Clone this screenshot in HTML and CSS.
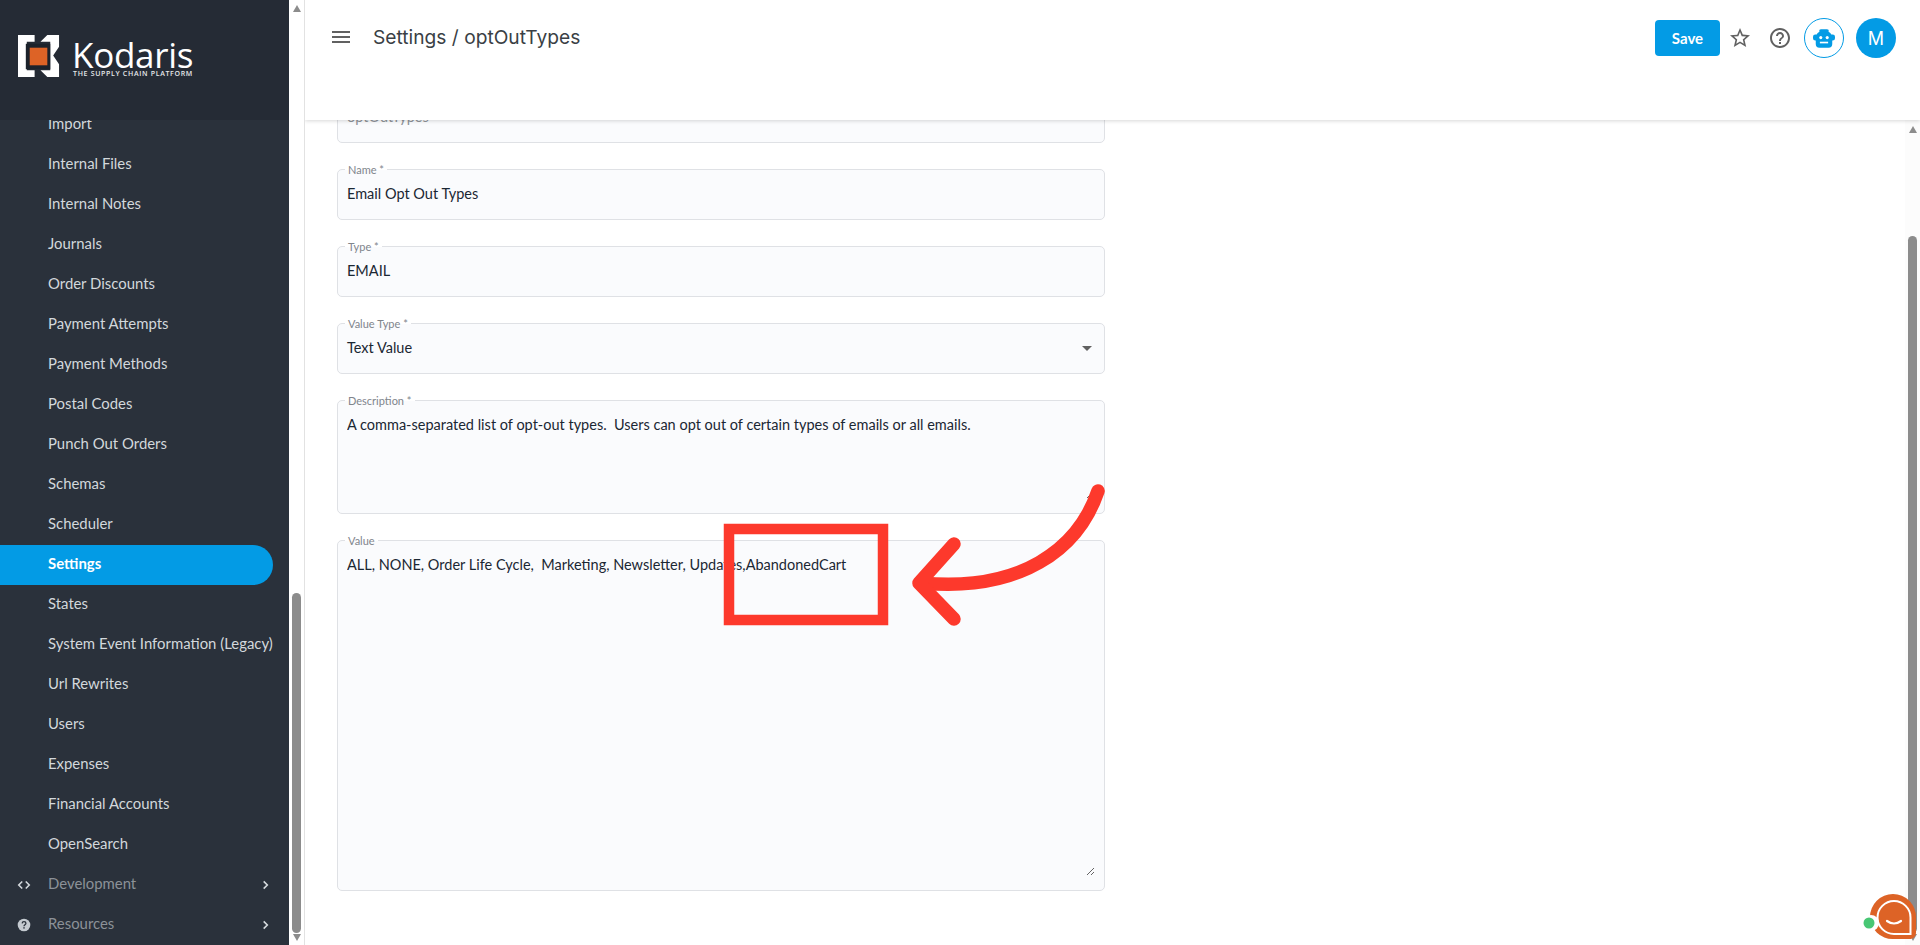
FILE: index.html
```html
<!DOCTYPE html>
<html lang="en">
<head>
<meta charset="utf-8">
<title>Settings / optOutTypes</title>
<link rel="stylesheet" href="styles.css">
</head>
<body>
<div class="app">
  <aside class="sidebar">
    <div class="brand">
      <svg class="brand-mark" viewBox="0 0 44 44" aria-hidden="true">
        <path fill="#fff" d="M0 0H17V7H9V36H17V43H0Z"/>
        <path fill="#fff" d="M23 7L30 0H42V12L36 21L42 30V43H30L23 36H33V7Z"/>
        <rect x="8" y="9" width="25" height="26" fill="#1c222b"/>
        <rect x="12" y="13" width="18" height="18" fill="#dd6326"/>
      </svg>
      <div class="brand-text">
        <div class="brand-name">Kodaris</div>
        <div class="brand-tag">THE SUPPLY CHAIN PLATFORM</div>
      </div>
    </div>
    <nav class="nav">
      <a class="nav-item">Import</a>
      <a class="nav-item">Internal Files</a>
      <a class="nav-item">Internal Notes</a>
      <a class="nav-item">Journals</a>
      <a class="nav-item">Order Discounts</a>
      <a class="nav-item">Payment Attempts</a>
      <a class="nav-item">Payment Methods</a>
      <a class="nav-item">Postal Codes</a>
      <a class="nav-item">Punch Out Orders</a>
      <a class="nav-item">Schemas</a>
      <a class="nav-item">Scheduler</a>
      <a class="nav-item active">Settings</a>
      <a class="nav-item">States</a>
      <a class="nav-item">System Event Information (Legacy)</a>
      <a class="nav-item">Url Rewrites</a>
      <a class="nav-item">Users</a>
      <a class="nav-item">Expenses</a>
      <a class="nav-item">Financial Accounts</a>
      <a class="nav-item">OpenSearch</a>
      <a class="nav-item group">
        <svg class="nav-icon" viewBox="0 0 16 16" aria-hidden="true"><path d="M6 4L2 8l4 4M10 4l4 4-4 4" fill="none" stroke="#d5dade" stroke-width="1.8"/></svg>
        <span>Development</span>
        <svg class="chevron" viewBox="0 0 10 12" aria-hidden="true"><path d="M3 2l4 4-4 4" fill="none" stroke="#d5dade" stroke-width="1.8"/></svg>
      </a>
      <a class="nav-item group">
        <svg class="nav-icon" viewBox="0 0 16 16" aria-hidden="true"><circle cx="8" cy="8" r="7.2" fill="#c4cad0"/><path d="M5.9 6.2C6 4.9 6.9 4.2 8 4.2c1.2 0 2.2.8 2.2 1.9 0 1.6-2.2 1.6-2.2 3.4" fill="none" stroke="#2a313b" stroke-width="1.5"/><rect x="7.2" y="10.5" width="1.6" height="1.6" fill="#2a313b"/></svg>
        <span>Resources</span>
        <svg class="chevron" viewBox="0 0 10 12" aria-hidden="true"><path d="M3 2l4 4-4 4" fill="none" stroke="#d5dade" stroke-width="1.8"/></svg>
      </a>
    </nav>
  </aside>
  <div class="side-scroll">
    <span class="tri up"></span>
    <span class="track side-track"><span class="thumb side-thumb"></span></span>
    <span class="tri down"></span>
  </div>
  <main class="main">
    <header class="topbar">
      <svg class="menu-icon" viewBox="0 0 24 24" aria-hidden="true"><path fill="#616161" d="M3 18h18v-2H3v2zm0-5h18v-2H3v2zm0-7v2h18V6H3z"/></svg>
      <h1 class="title">Settings / optOutTypes</h1>
      <div class="actions">
        <button class="save">Save</button>
        <svg class="tool star" viewBox="0 0 24 24" aria-hidden="true"><path fill="#616161" d="M22 9.24l-7.19-.62L12 2 9.19 8.63 2 9.24l5.46 4.73L5.82 21 12 17.27 18.18 21l-1.63-7.03L22 9.24zM12 15.4l-3.76 2.27 1-4.28-3.32-2.88 4.38-.38L12 6.1l1.71 4.04 4.38.38-3.32 2.88 1 4.28L12 15.4z"/></svg>
        <svg class="tool help" viewBox="0 0 24 24" aria-hidden="true"><path fill="#616161" d="M11 18h2v-2h-2v2zm1-16C6.48 2 2 6.48 2 12s4.48 10 10 10 10-4.48 10-10S17.52 2 12 2zm0 18c-4.41 0-8-3.59-8-8s3.59-8 8-8 8 3.59 8 8-3.59 8-8 8zm0-14c-2.21 0-4 1.79-4 4h2c0-1.1.9-2 2-2s2 .9 2 2c0 2-3 1.75-3 5h2c0-2.25 3-2.5 3-5 0-2.21-1.79-4-4-4z"/></svg>
        <span class="bot">
          <svg viewBox="0 0 24 20" aria-hidden="true">
            <path fill="#039be5" d="M9 0h6a2 2 0 0 1 2 2.500 5 5 0 0 1 3 3.200h1.500A2.500 2.500 0 0 1 24 8.200v1.600a2.500 2.500 0 0 1-2.500 2.500H21V16a4 4 0 0 1-4 4H7a4 4 0 0 1-4-4v-3.700H2.500A2.500 2.500 0 0 1 0 9.800V8.200A2.500 2.500 0 0 1 2.500 5.700H4a5 5 0 0 1 3-3.200A2 2 0 0 1 9 0z"/>
            <circle cx="8.500" cy="9" r="1.700" fill="#fff"/><circle cx="15.500" cy="9" r="1.700" fill="#fff"/><rect x="7.500" y="13.500" width="9" height="1.800" fill="#fff"/>
          </svg>
        </span>
        <span class="avatar">M</span>
      </div>
    </header>
    <div class="work">
      <form class="form">
        <div class="field short"><span class="label">Key *</span><div class="value muted">optOutTypes</div></div>
        <div class="field short"><span class="label">Name *</span><div class="value">Email Opt Out Types</div></div>
        <div class="field short"><span class="label">Type *</span><div class="value">EMAIL</div></div>
        <div class="field short"><span class="label">Value Type *</span><div class="value select">Text Value<span class="caret"></span></div></div>
        <div class="field area desc"><span class="label">Description *</span><div class="value grip">A comma-separated list of opt-out types.  Users can opt out of certain types of emails or all emails.</div></div>
        <div class="field area big"><span class="label">Value</span><div class="value grip">ALL, NONE, Order Life Cycle,  Marketing, Newsletter, Updates,AbandonedCart</div></div>
      </form>
      <div class="main-scroll">
        <span class="tri up"></span>
        <span class="track main-track"><span class="thumb main-thumb"></span></span>
        <span class="tri down"></span>
      </div>
    </div>
  </main>
</div>
<svg class="annotation" viewBox="0 0 1920 945" aria-hidden="true">
  <rect x="729" y="529" width="154" height="91" fill="none" stroke="#fd392c" stroke-width="10.500"/>
  <path d="M1098 491C1078 550 1020 592 922 583" fill="none" stroke="#fd392c" stroke-width="13.500" stroke-linecap="round"/>
  <path d="M954 544L919 583L954 619" fill="none" stroke="#fd392c" stroke-width="13.500" stroke-linecap="round" stroke-linejoin="round"/>
</svg>
<svg class="chat" viewBox="0 0 60 50" aria-hidden="true">
  <path fill="#dd6326" d="M31 1a23 23 0 0 1 23 23v16a6 6 0 0 1-6 6H31A22.500 22.500 0 0 1 8 24 23 23 0 0 1 31 1z"/>
  <circle cx="9" cy="30" r="8" fill="#fff"/>
  <path fill="none" stroke="#fff" stroke-width="2" d="M32 8a16.500 16.500 0 0 1 16.500 16.500V41H32a16.500 16.500 0 0 1 0-33z"/>
  <path fill="none" stroke="#fff" stroke-width="2.200" stroke-linecap="round" d="M25 28q7 5 14 0"/>
  <circle cx="7" cy="30" r="5.500" fill="#48c774"/>
</svg>
</body>
</html>
```
FILE: styles.css
```css
* { box-sizing: border-box; }
html, body { margin: 0; height: 100%; overflow: hidden; background: #fff; }
body { font-family: "Lato", "Noto Sans", sans-serif; font-size: 14px; color: #1b2733; }

.app { display: flex; height: 945px; }

.sidebar { width: 289px; flex: none; background: #2a313b; overflow: hidden; position: relative; }
.brand { position: relative; z-index: 2; height: 120px; background: #252b35; padding: 35px 0 0 18px; display: flex; gap: 11px; align-items: flex-start; }
.brand-mark { width: 43px; height: 43px; flex: none; }
.brand-text { color: #fff; font-family: "Open Sans", sans-serif; width: 122px; }
.brand-name { font-size: 35px; line-height: 30px; margin-top: 5px; letter-spacing: -.3px; }
.brand-tag { font-size: 7px; line-height: 8px; font-weight: 600; letter-spacing: .68px; white-space: nowrap; color: #e6e8ea; margin-left: 1px; }

.nav { margin-top: -15px; display: flex; flex-direction: column; }
.nav-item { height: 40px; display: flex; align-items: center; padding: 0 0 4px 48px; width: 273px; font-size: 14.900px; color: #d3d8dc; white-space: nowrap; border-radius: 0 20px 20px 0; }
.nav-item.active { background: #039be5; color: #fff; font-weight: 700; }
.nav-item.group { padding-left: 17px; width: 289px; color: #8c9198; }
.nav-icon { width: 14px; height: 14px; margin: 4px 17px 0 0; flex: none; }
.chevron { width: 9px; height: 12px; margin: 4px 19px 0 auto; }

.side-scroll { width: 16px; flex: none; background: #fff; border-right: 1px solid #e2e2e2; display: flex; flex-direction: column; align-items: center; padding: 5px 0 4px; }
.tri { width: 0; height: 0; flex: none; border-left: 4.500px solid transparent; border-right: 4.500px solid transparent; }
.tri.up { border-bottom: 7px solid #8c8c8c; }
.tri.down { border-top: 7px solid #8c8c8c; }
.track { flex: 1; width: 9px; display: flex; flex-direction: column; justify-content: flex-end; }
.thumb { display: block; width: 9px; background: #8c8c8c; border-radius: 5px; }
.side-track { padding-bottom: 1px; }
.side-thumb { height: 340px; }

.main { flex: 1; min-width: 0; display: flex; flex-direction: column; position: relative; overflow: hidden; }
.topbar { position: relative; z-index: 2; height: 120px; flex: none; background: #fff; box-shadow: 0 1px 4px rgba(0,0,0,.16); display: flex; align-items: flex-start; padding: 25px 0 0 24px; }
.menu-icon { width: 24px; height: 24px; flex: none; }
.title { margin: 0 0 0 20px; font-family: "Inter", sans-serif; font-size: 19.200px; line-height: 24px; font-weight: 400; color: #3a3f45; }
.actions { margin-left: auto; margin-right: 24px; margin-top: -7px; display: flex; align-items: center; }
.save { width: 65px; height: 36px; border: 0; border-radius: 4px; background: #039be5; color: #fff; font: 700 15px "Lato", sans-serif; padding: 0; }
.tool { width: 24px; height: 24px; }
.star { margin-left: 8px; }
.help { margin-left: 16px; }
.bot { width: 40px; height: 40px; margin-left: 12px; border: 1px solid #039be5; border-radius: 50%; display: flex; align-items: center; justify-content: center; }
.bot svg { width: 22px; height: 19px; }
.avatar { width: 40px; height: 40px; margin-left: 12px; border-radius: 50%; background: #039be5; color: #fff; font-size: 18px; display: flex; align-items: center; justify-content: center; font-family: "Inter", sans-serif; }

.work { flex: 1; min-height: 0; display: flex; }
.form { width: 768px; margin: -28px 0 0 32px; display: flex; flex-direction: column; gap: 26px; flex: none; }
.field { position: relative; background: #fafbfd; border: 1px solid #dfe1e5; border-radius: 5px; padding: 0 8px 0 9px; flex: none; }
.field.short { height: 51px; padding-top: 14px; }
.field.area { padding-top: 14px; }
.field.desc { height: 114px; }
.field.big { height: 351px; }
.label { position: absolute; left: 7px; top: -6px; padding: 0 3px; font-size: 11px; line-height: 12px; color: #80858c; background: linear-gradient(#fff 50%, #fafbfd 50%); }
.value { font-size: 14.500px; line-height: 20px; white-space: pre-wrap; color: #1b2733; }
.value.muted { color: #8e9399; }
.select { display: flex; justify-content: space-between; align-items: center; }
.caret { width: 0; height: 0; border-left: 5px solid transparent; border-right: 5px solid transparent; border-top: 5px solid #616161; margin-right: 4px; }
.grip { overflow: hidden; resize: both; width: 748px; }
.desc .grip { height: 84px; }
.big .grip { height: 321px; }

.main-scroll { margin-left: auto; width: 15px; flex: none; background: #fcfcfc; display: flex; flex-direction: column; align-items: center; padding: 6px 0 4px; }
.main-thumb { height: 697px; }
.main-track { padding-bottom: 1px; }

.annotation { position: fixed; left: 0; top: 0; width: 1920px; height: 945px; z-index: 5; pointer-events: none; }
.chat { position: fixed; left: 1862px; top: 893px; width: 60px; height: 50px; z-index: 6; }
```
